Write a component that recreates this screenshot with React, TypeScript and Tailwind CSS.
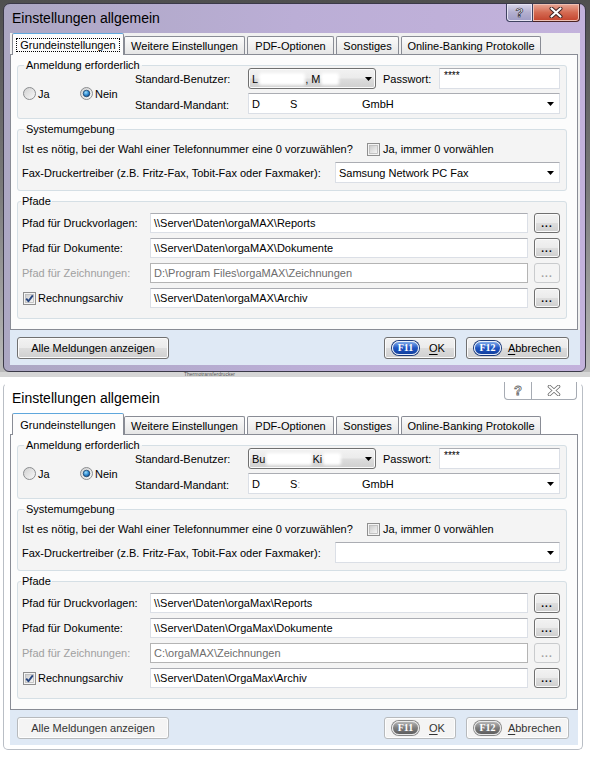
import React from 'react'

type Variant = 'aero' | 'plain'

interface DialogProps {
  variant: Variant
  userFirst: string
  userSecond: string
  mandantMid: React.ReactNode
  fax: string
  paths: { druck: string; doku: string; zeich: string; archiv: string }
}

const btnFace =
  'bg-[linear-gradient(#f2f2f2,#ebebeb_48%,#dddddd_52%,#cfcfcf)] border border-[#707070] rounded-[3px] shadow-[inset_0_0_0_1px_#fbfbfb]'
const btnFlat =
  'bg-[#f4f4f4] border border-[#b7babd] rounded-[3px] shadow-[inset_0_0_0_1px_#fdfdfd]'

function Radio({ checked }: { checked?: boolean }) {
  return (
    <svg width="13" height="13" viewBox="0 0 13 13" className="shrink-0">
      <defs>
        <linearGradient id="radioFace" x1="0" y1="0" x2="1" y2="1">
          <stop offset="0" stopColor="#cfcfcf" />
          <stop offset="1" stopColor="#fafafa" />
        </linearGradient>
        <radialGradient id="radioDot" cx="0.4" cy="0.35" r="0.75">
          <stop offset="0" stopColor="#9adcfb" />
          <stop offset="0.55" stopColor="#2b86cf" />
          <stop offset="1" stopColor="#0d3a6e" />
        </radialGradient>
      </defs>
      <circle cx="6.5" cy="6.5" r="6" fill="url(#radioFace)" stroke="#8b8d8f" />
      {checked && (
        <circle cx="6.5" cy="6.5" r="3.3" fill="url(#radioDot)" stroke="#16385f" strokeWidth="0.7" />
      )}
    </svg>
  )
}

function Check({ checked }: { checked?: boolean }) {
  return (
    <svg width="13" height="13" viewBox="0 0 13 13" className="shrink-0">
      <defs>
        <linearGradient id="checkFace" x1="0" y1="0" x2="1" y2="1">
          <stop offset="0" stopColor="#cbcbcb" />
          <stop offset="1" stopColor="#f7f7f7" />
        </linearGradient>
      </defs>
      <rect x="0.5" y="0.5" width="12" height="12" fill="#f4f4f4" stroke="#8f8f8f" />
      <rect x="2.5" y="2.5" width="8" height="8" fill="url(#checkFace)" stroke="#b9b9b9" strokeWidth="0.8" />
      {checked && (
        <path d="M3.2 6.6 L5.4 9.2 L9.8 3.4" stroke="#27467f" strokeWidth="1.9" fill="none" strokeLinejoin="round" />
      )}
    </svg>
  )
}

function Arrow() {
  return (
    <svg width="7" height="4" viewBox="0 0 7 4" className="shrink-0">
      <path d="M0 0h7L3.5 4z" fill="#000" />
    </svg>
  )
}

function TextBox({ value, disabled }: { value: string; disabled?: boolean }) {
  return (
    <div
      className={`h-[20px] flex-1 flex items-center px-[3px] bg-white border ${
        disabled
          ? 'border-[#b4b4b4] text-[#6d6d6d]'
          : 'border-[#dbdfe6] border-t-[#abadb3] text-black'
      }`}>
      {value}
    </div>
  )
}

function Browse({ disabled }: { disabled?: boolean }) {
  return (
    <div
      className={`ml-[6px] w-[26px] h-[20px] flex items-end justify-center pb-[3px] leading-none font-bold text-[10px] tracking-[1px] ${
        disabled ? 'border border-[#c9cbcd] rounded-[3px] bg-[#f4f4f4] text-[#a0a0a0]' : `${btnFace} text-black`
      }`}>
      ...
    </div>
  )
}

function FKey({ label, plain }: { label: string; plain?: boolean }) {
  return (
    <span
      className={`w-[27px] h-[14px] rounded-full flex items-center justify-center text-white font-bold text-[10px] leading-none font-['Liberation_Serif',serif] border ${
        plain
          ? 'bg-linear-to-b from-[#b4b4b4] via-[#7d7d7d] to-[#5e5e5e] border-[#e9e9e9] ring-1 ring-[#8a8a8a]'
          : 'bg-linear-to-b from-[#7fa9ea] via-[#1f55c2] to-[#12409f] border-[#e9f0fb] ring-1 ring-[#1c3b7c]'
      }`}>
      {label}
    </span>
  )
}

function Blob({ className }: { className: string }) {
  return <span className={`inline-block h-[12px] bg-white blur-[1.5px] rounded-[2px] ${className}`} />
}

const tabs = [
  { label: 'Weitere Einstellungen', w: 'w-[121px]' },
  { label: 'PDF-Optionen', w: 'w-[87px]' },
  { label: 'Sonstiges', w: 'w-[63px]' },
  { label: 'Online-Banking Protokolle', w: 'w-[140px]' },
]

function TitleBar({ aero }: { aero: boolean }) {
  return (
    <div className="h-[29px] flex items-start">
      <div className="pl-[8px] pt-[5px] text-[14px] leading-[18px] text-black">Einstellungen allgemein</div>
      <div className="ml-auto mr-[5px] flex">
        {aero ? (
          <>
            <div className="w-[27px] h-[18px] rounded-bl-[4px] border border-t-0 border-[#3f4260] bg-linear-to-b from-[#d9d6ea] via-[#b3afcf] to-[#9f9cc4] flex items-center justify-center shadow-[inset_0_0_0_1px_#e6e3f3]">
              <span className="text-[13px] font-bold leading-none text-white [-webkit-text-stroke:0.7px_#2d2d3a]">?</span>
            </div>
            <div className="w-[47px] h-[18px] rounded-br-[4px] border border-l-0 border-t-0 border-[#4a2222] bg-linear-to-b from-[#e7a796] via-[#d46a52] to-[#c2412b] flex items-center justify-center shadow-[inset_0_0_0_1px_#eec0b4]">
              <svg width="14" height="11" viewBox="0 0 14 11">
                <path d="M2.5 1.5 L11.5 9.5 M11.5 1.5 L2.5 9.5" stroke="#3a2020" strokeWidth="4" strokeLinecap="round" />
                <path d="M2.5 1.5 L11.5 9.5 M11.5 1.5 L2.5 9.5" stroke="#fff" strokeWidth="2.2" strokeLinecap="round" />
              </svg>
            </div>
          </>
        ) : (
          <>
            <div className="w-[28px] h-[18px] -mt-[2px] rounded-bl-[4px] border border-t-0 border-[#a6abb3] bg-white flex items-center justify-center">
              <span className="text-[13px] font-bold leading-none text-white [-webkit-text-stroke:0.8px_#6b6b6b]">?</span>
            </div>
            <div className="w-[45px] h-[18px] -mt-[2px] rounded-br-[4px] border border-l-0 border-t-0 border-[#a6abb3] bg-white flex items-center justify-center">
              <svg width="14" height="11" viewBox="0 0 14 11">
                <path d="M2.5 1.5 L11.5 9.5 M11.5 1.5 L2.5 9.5" stroke="#6b6b6b" strokeWidth="3.6" strokeLinecap="round" />
                <path d="M2.5 1.5 L11.5 9.5 M11.5 1.5 L2.5 9.5" stroke="#fff" strokeWidth="2" strokeLinecap="round" />
              </svg>
            </div>
          </>
        )}
      </div>
    </div>
  )
}

function Dialog({ variant, userFirst, userSecond, mandantMid, fax, paths }: DialogProps) {
  const aero = variant === 'aero'
  return (
    <div
      className={
        aero
          ? 'ml-[3px] w-[583px] h-[369px] rounded-t-[7px] rounded-b-[6px] border border-[#3b3948] bg-linear-to-r from-[#aca7c3] via-[#bbaed6] to-[#c3b2dc] flex flex-col'
          : 'ml-[3px] w-[580px] h-[367px] rounded-[5px] border border-[#b9bec5] border-t-white bg-white flex flex-col'
      }>
      <TitleBar aero={aero} />
      <div className={aero ? 'pl-[6px] pr-[5px]' : 'pl-[6px] pr-[4px]'}>
        <div className={`h-[332px] flex flex-col ${aero ? 'w-[570px] bg-[#f0f0f0]' : 'w-[568px] bg-white'}`}>
          {/* tab strip */}
          <div className="h-[21px] flex items-end pl-[2px]">
            <div className="relative z-10 -mb-px w-[112px] h-[22px] rounded-t-[2px] border border-b-0 border-[#898c95] border-t-[#5fa7dc] bg-[#fcfcfc] flex items-center justify-center">
              <span className={aero ? 'px-[3px] leading-[12px] outline-1 outline-dotted outline-black' : 'px-[3px] leading-[12px]'}>
                Grundeinstellungen
              </span>
            </div>
            {tabs.map(t => (
              <div
                key={t.label}
                className={`${t.w} mr-[2px] h-[18px] rounded-t-[2px] border border-b-0 border-[#898c95] bg-linear-to-b from-[#fbfbfb] to-[#e6e6e6] flex items-center justify-center`}>
                {t.label}
              </div>
            ))}
          </div>

          {/* tab panel */}
          <div className="w-[568px] h-[276px] border border-[#898c95] bg-[#fcfcfc]">
            {/* Anmeldung */}
            <fieldset className="ml-[6px] w-[550px] mt-[4px] border border-[#d5dfe5] rounded-[3px] bg-[#f4f4f4] pb-[4px]">
              <legend className="ml-[6px] px-[2px] leading-[13px]">Anmeldung erforderlich</legend>
              <div className="-mt-[4px] pl-[4px] pr-[6px] flex items-center">
                <div className="w-[113px] pl-[1px] pt-[5px] flex items-center">
                  <div className="w-[57px] flex items-center gap-[2px]">
                    <Radio />
                    <span>Ja</span>
                  </div>
                  <div className="flex items-center gap-[2px]">
                    <Radio checked />
                    <span>Nein</span>
                  </div>
                </div>
                <div className="flex-1 grid grid-cols-[113px_1fr] gap-y-[4px] items-center">
                  <span>Standard-Benutzer:</span>
                  <div className="flex items-center">
                    <div className={`w-[128px] h-[21px] ${btnFace} flex items-center pl-[3px] pr-[3px]`}>
                      <span>{userFirst}</span>
                      <Blob className="w-[46px] ml-[1px]" />
                      <span>{userSecond}</span>
                      <Blob className="w-[18px] ml-[1px]" />
                      <span className="ml-auto">
                        <Arrow />
                      </span>
                    </div>
                    <span className="ml-[7px]">Passwort:</span>
                    <div className="ml-auto w-[121px] h-[21px] bg-white border border-[#dbdfe6] border-t-[#abadb3] pl-[4px] leading-[14px] text-[10px]">
                      ****
                    </div>
                  </div>
                  <span className="pt-[2px]">Standard-Mandant:</span>
                  <div className="h-[21px] bg-white border border-[#dbdfe6] border-t-[#abadb3] flex items-center pl-[3px] pr-[5px]">
                    <span className="w-[38px]">D</span>
                    <span className="w-[72px]">{mandantMid}</span>
                    <span>GmbH</span>
                    <span className="ml-auto">
                      <Arrow />
                    </span>
                  </div>
                </div>
              </div>
            </fieldset>

            {/* Systemumgebung */}
            <fieldset className="ml-[6px] w-[550px] mt-[4px] border border-[#d5dfe5] rounded-[3px] bg-[#f4f4f4] pb-[7px]">
              <legend className="ml-[6px] px-[2px] leading-[13px]">Systemumgebung</legend>
              <div className="pl-[4px] pr-[6px] pt-[5px] flex flex-col gap-[5px]">
                <div className="h-[16px] flex items-center">
                  <span className="w-[345px]">Ist es nötig, bei der Wahl einer Telefonnummer eine 0 vorzuwählen?</span>
                  <Check />
                  <span className="ml-[3px]">Ja, immer 0 vorwählen</span>
                </div>
                <div className="flex items-center">
                  <span className="w-[313px]">Fax-Druckertreiber (z.B. Fritz-Fax, Tobit-Fax oder Faxmaker):</span>
                  <div className="flex-1 h-[21px] bg-white border border-[#dbdfe6] border-t-[#abadb3] flex items-center pl-[3px] pr-[5px]">
                    <span>{fax}</span>
                    <span className="ml-auto">
                      <Arrow />
                    </span>
                  </div>
                </div>
              </div>
            </fieldset>

            {/* Pfade */}
            <fieldset className="ml-[6px] w-[550px] mt-[4px] border border-[#d5dfe5] rounded-[3px] bg-[#f4f4f4] pb-[10px]">
              <legend className="ml-[3px] px-[1px] leading-[13px]">Pfade</legend>
              <div className="pl-[4px] pr-[6px] pt-[5px] flex flex-col gap-[5px]">
                <div className="flex items-center">
                  <span className="w-[128px]">Pfad für Druckvorlagen:</span>
                  <TextBox value={paths.druck} />
                  <Browse />
                </div>
                <div className="flex items-center">
                  <span className="w-[128px]">Pfad für Dokumente:</span>
                  <TextBox value={paths.doku} />
                  <Browse />
                </div>
                <div className="flex items-center">
                  <span className="w-[128px] text-[#a0a0a0]">Pfad für Zeichnungen:</span>
                  <TextBox value={paths.zeich} disabled />
                  <Browse disabled />
                </div>
                <div className="flex items-center">
                  <div className="w-[128px] pl-[1px] flex items-center gap-[2px]">
                    <Check checked />
                    <span>Rechnungsarchiv</span>
                  </div>
                  <TextBox value={paths.archiv} />
                  <Browse />
                </div>
              </div>
            </fieldset>
          </div>

          {/* footer */}
          <div className={`h-[35px] bg-[#dfe9f5] flex items-center pl-[7px] ${aero ? 'pr-[11px]' : 'pr-[9px]'}`}>
            <div className={`w-[152px] h-[22px] flex items-center justify-center ${aero ? btnFace : `${btnFlat} text-[#333]`}`}>
              Alle Meldungen anzeigen
            </div>
            <div className={`ml-auto w-[72px] h-[22px] flex items-center pl-[7px] ${aero ? btnFace : `${btnFlat} text-[#333]`}`}>
              <FKey label="F11" plain={!aero} />
              <span className="flex-1 text-center">
                <span className="underline underline-offset-2">O</span>K
              </span>
            </div>
            <div className={`ml-[10px] w-[103px] h-[22px] flex items-center pl-[7px] ${aero ? btnFace : `${btnFlat} text-[#333]`}`}>
              <FKey label="F12" plain={!aero} />
              <span className="flex-1 text-center">
                <span className="underline underline-offset-2">A</span>bbrechen
              </span>
            </div>
          </div>
        </div>
      </div>
    </div>
  )
}

export default function App() {
  return (
    <div className="w-[590px] h-[768px] overflow-hidden bg-white text-[11px] leading-[14px] text-black font-['Liberation_Sans',Arial,sans-serif]">
      <div className="h-[377px] bg-linear-to-b from-[#4f4f4f] via-[#7a7a7a] to-[#bdbdbd] pt-[3px] flex flex-col">
        <Dialog
          variant="aero"
          userFirst="L"
          userSecond=", M"
          mandantMid="S"
          fax="Samsung Network PC Fax"
          paths={{
            druck: '\\\\Server\\Daten\\orgaMAX\\Reports',
            doku: '\\\\Server\\Daten\\orgaMAX\\Dokumente',
            zeich: 'D:\\Program Files\\orgaMAX\\Zeichnungen',
            archiv: '\\\\Server\\Daten\\orgaMAX\\Archiv',
          }}
        />
        <div className="flex-1 bg-[#d6d6d6] pl-[184px] flex items-center">
          <div className="text-[#555] text-[5px] leading-[5px]">Thermotransferdrucker</div>
        </div>
      </div>
      <div className="pt-[6px]">
        <Dialog
          variant="plain"
          userFirst="Bu"
          userSecond="Ki"
          mandantMid={
            <>
              S<span className="text-[#b0b0b0]">:</span>
            </>
          }
          fax=""
          paths={{
            druck: '\\\\Server\\Daten\\orgaMax\\Reports',
            doku: '\\\\Server\\Daten\\OrgaMax\\Dokumente',
            zeich: 'C:\\orgaMAX\\Zeichnungen',
            archiv: '\\\\Server\\Daten\\OrgaMax\\Archiv',
          }}
        />
      </div>
    </div>
  )
}
